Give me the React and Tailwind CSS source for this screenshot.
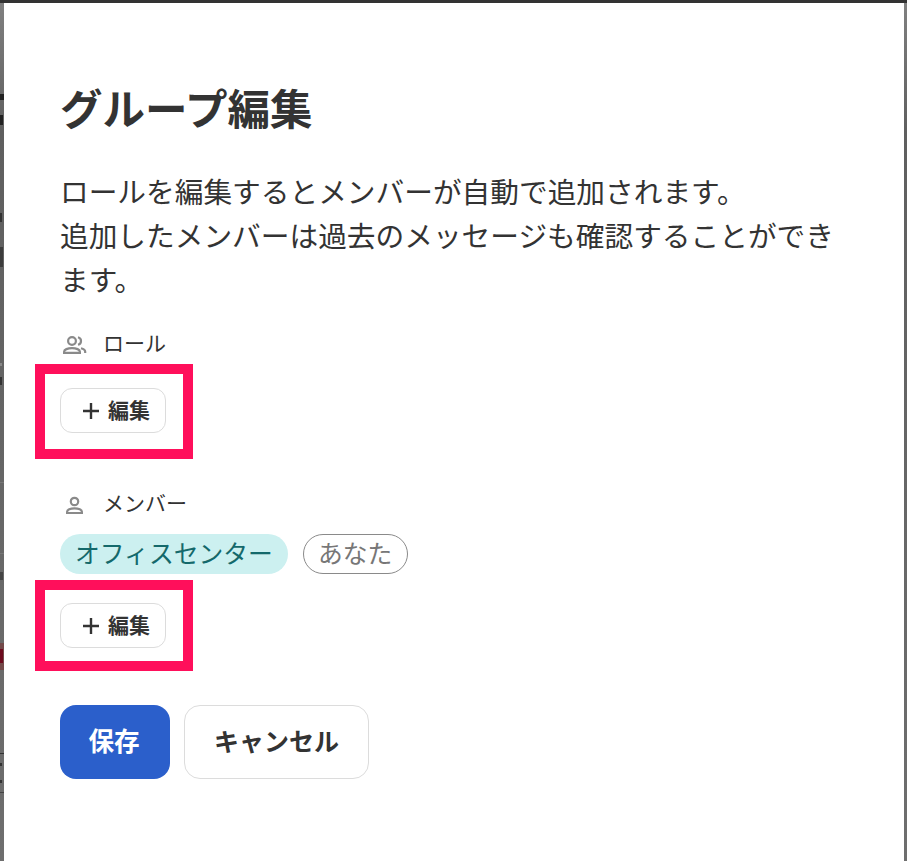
import React from 'react';

const FONT = { fontFamily: '"Noto Sans CJK JP", sans-serif' };

const RolesIcon = () => (
  <svg width="28" height="24" viewBox="0 0 28 24" fill="none" stroke="#8a8a8a" strokeWidth="2.2">
    <circle cx="12" cy="9" r="3.9" />
    <path d="M4.1 20.9v-1.1c0-2.2 3.6-3.7 7.9-3.7s7.9 1.5 7.9 3.7v1.1z" />
    <path d="M18 5.2a3.9 3.9 0 0 1 0 7.6" />
    <path d="M21 16.2c2.6.6 4.2 1.8 4.2 3.5v1.4" />
  </svg>
);

const PersonIcon = () => (
  <svg width="28" height="24" viewBox="0 0 28 24" fill="none" stroke="#8a8a8a" strokeWidth="2.2">
    <circle cx="14.5" cy="9.5" r="3.7" />
    <path d="M7.1 21v-1.2c0-2 3.3-3.4 7.4-3.4s7.4 1.4 7.4 3.4V21z" />
  </svg>
);

const EditInner = () => (
  <button className="w-[106px] h-[45px] rounded-xl border border-[#dcdcdc] bg-white flex items-center pl-[21px] gap-[8px] text-[#333] text-[21px] font-bold leading-none">
    <svg width="18" height="18" viewBox="0 0 18 18" stroke="#333" strokeWidth="2.4">
      <path d="M9 1v16M1 9h16" />
    </svg>
    <span className="pb-[2px]">編集</span>
  </button>
);

// what shows of the page behind the dialog
const BackdropEdge = () => (
  <div className="w-[4px] flex flex-col overflow-hidden bg-linear-to-b from-[#808080] via-[#5f5f5f] via-15% to-[#6e6e6e]">
    <div className="mt-[91px] h-[6px] bg-[#222]" />
    <div className="mt-[15px] h-[10px] w-[3px] bg-[#222]" />
    <div className="mt-[88px] h-[9px] w-[2px] bg-[#333]" />
    <div className="mt-[25px] h-[20px] w-[3px] bg-[#3c3c3c]" />
    <div className="mt-[96px] h-[3px] w-[2px] bg-[#888]" />
    <div className="mt-[11px] h-[8px] w-[2px] bg-[#333]" />
    <div className="mt-[97px] h-px bg-[#777]" />
    <div className="mt-[70px] h-px bg-[#777]" />
    <div className="mt-[18px] h-[8px] w-[3px] bg-[#444]" />
    <div className="mt-[63px] h-[27px] bg-[#734a4a] pt-[6px]">
      <div className="h-[14px] w-[3px] bg-[#6d0a1e]" />
    </div>
    <div className="mt-[83px] h-px bg-[#333]" />
    <div className="mt-[9px] h-[3px] w-[2px] bg-[#333]" />
    <div className="mt-[14px] h-[3px] w-[2px] bg-[#333]" />
    <div className="mt-[9px] h-px bg-[#444]" />
  </div>
);

export default function App() {
  return (
    <div className="w-[907px] h-[861px] flex flex-col overflow-hidden bg-white" style={FONT}>
      <div className="h-[3px] bg-[#333]" />
      <div className="flex flex-1">
        <BackdropEdge />
        <div className="flex-1 bg-white pl-[56px] pr-[54px] pt-[78px] text-[#333]">
          <h1 className="text-[42.5px] leading-[52px] pb-[4px] font-bold">グループ編集</h1>
          <p className="mt-[32px] text-[28.7px] leading-[44px]">
            ロールを編集するとメンバーが自動で追加されます。
            <br />
            追加したメンバーは過去のメッセージも確認することができます。
          </p>
          <div className="mt-[27px] flex items-center h-[32px] text-[21px]">
            <RolesIcon />
            <span className="ml-[15px] pb-[2px]">ロール</span>
          </div>
          <div className="-ml-[25px] mt-[4px] w-[158px] h-[95px] border-[10px] border-[#ff0f5b] pl-[15px] pt-[14px]">
            <EditInner />
          </div>
          <div className="mt-[29px] flex items-center h-[32px] text-[21px]">
            <PersonIcon />
            <span className="ml-[15px] pb-[2px]">メンバー</span>
          </div>
          <div className="mt-[14px] flex items-center gap-[15px]">
            <span className="h-[40px] px-[15px] rounded-full bg-[#ccf0f0] text-[#14696b] text-[24.8px] leading-[37px]">オフィスセンター</span>
            <span className="h-[40px] pl-[14px] pr-[15px] rounded-full border border-[#8a8a8a] text-[#777] text-[24.8px] leading-[35px]">あなた</span>
          </div>
          <div className="-ml-[25px] mt-[6px] w-[158px] h-[91px] border-[10px] border-[#ff0f5b] pl-[15px] pt-[13px]">
            <EditInner />
          </div>
          <div className="mt-[34px] flex gap-[14px]">
            <button className="w-[110px] h-[74px] pb-[3px] pr-[2px] rounded-2xl bg-[#2b5fcb] text-white text-[25.6px] font-bold">保存</button>
            <button className="w-[185px] h-[74px] pb-[2px] rounded-2xl border border-[#dcdcdc] bg-white text-[#333] text-[25px] font-bold">キャンセル</button>
          </div>
        </div>
        <div className="w-[3px] bg-linear-to-b from-[#808080] via-[#5f5f5f] via-15% to-[#6e6e6e]" />
      </div>
    </div>
  );
}
